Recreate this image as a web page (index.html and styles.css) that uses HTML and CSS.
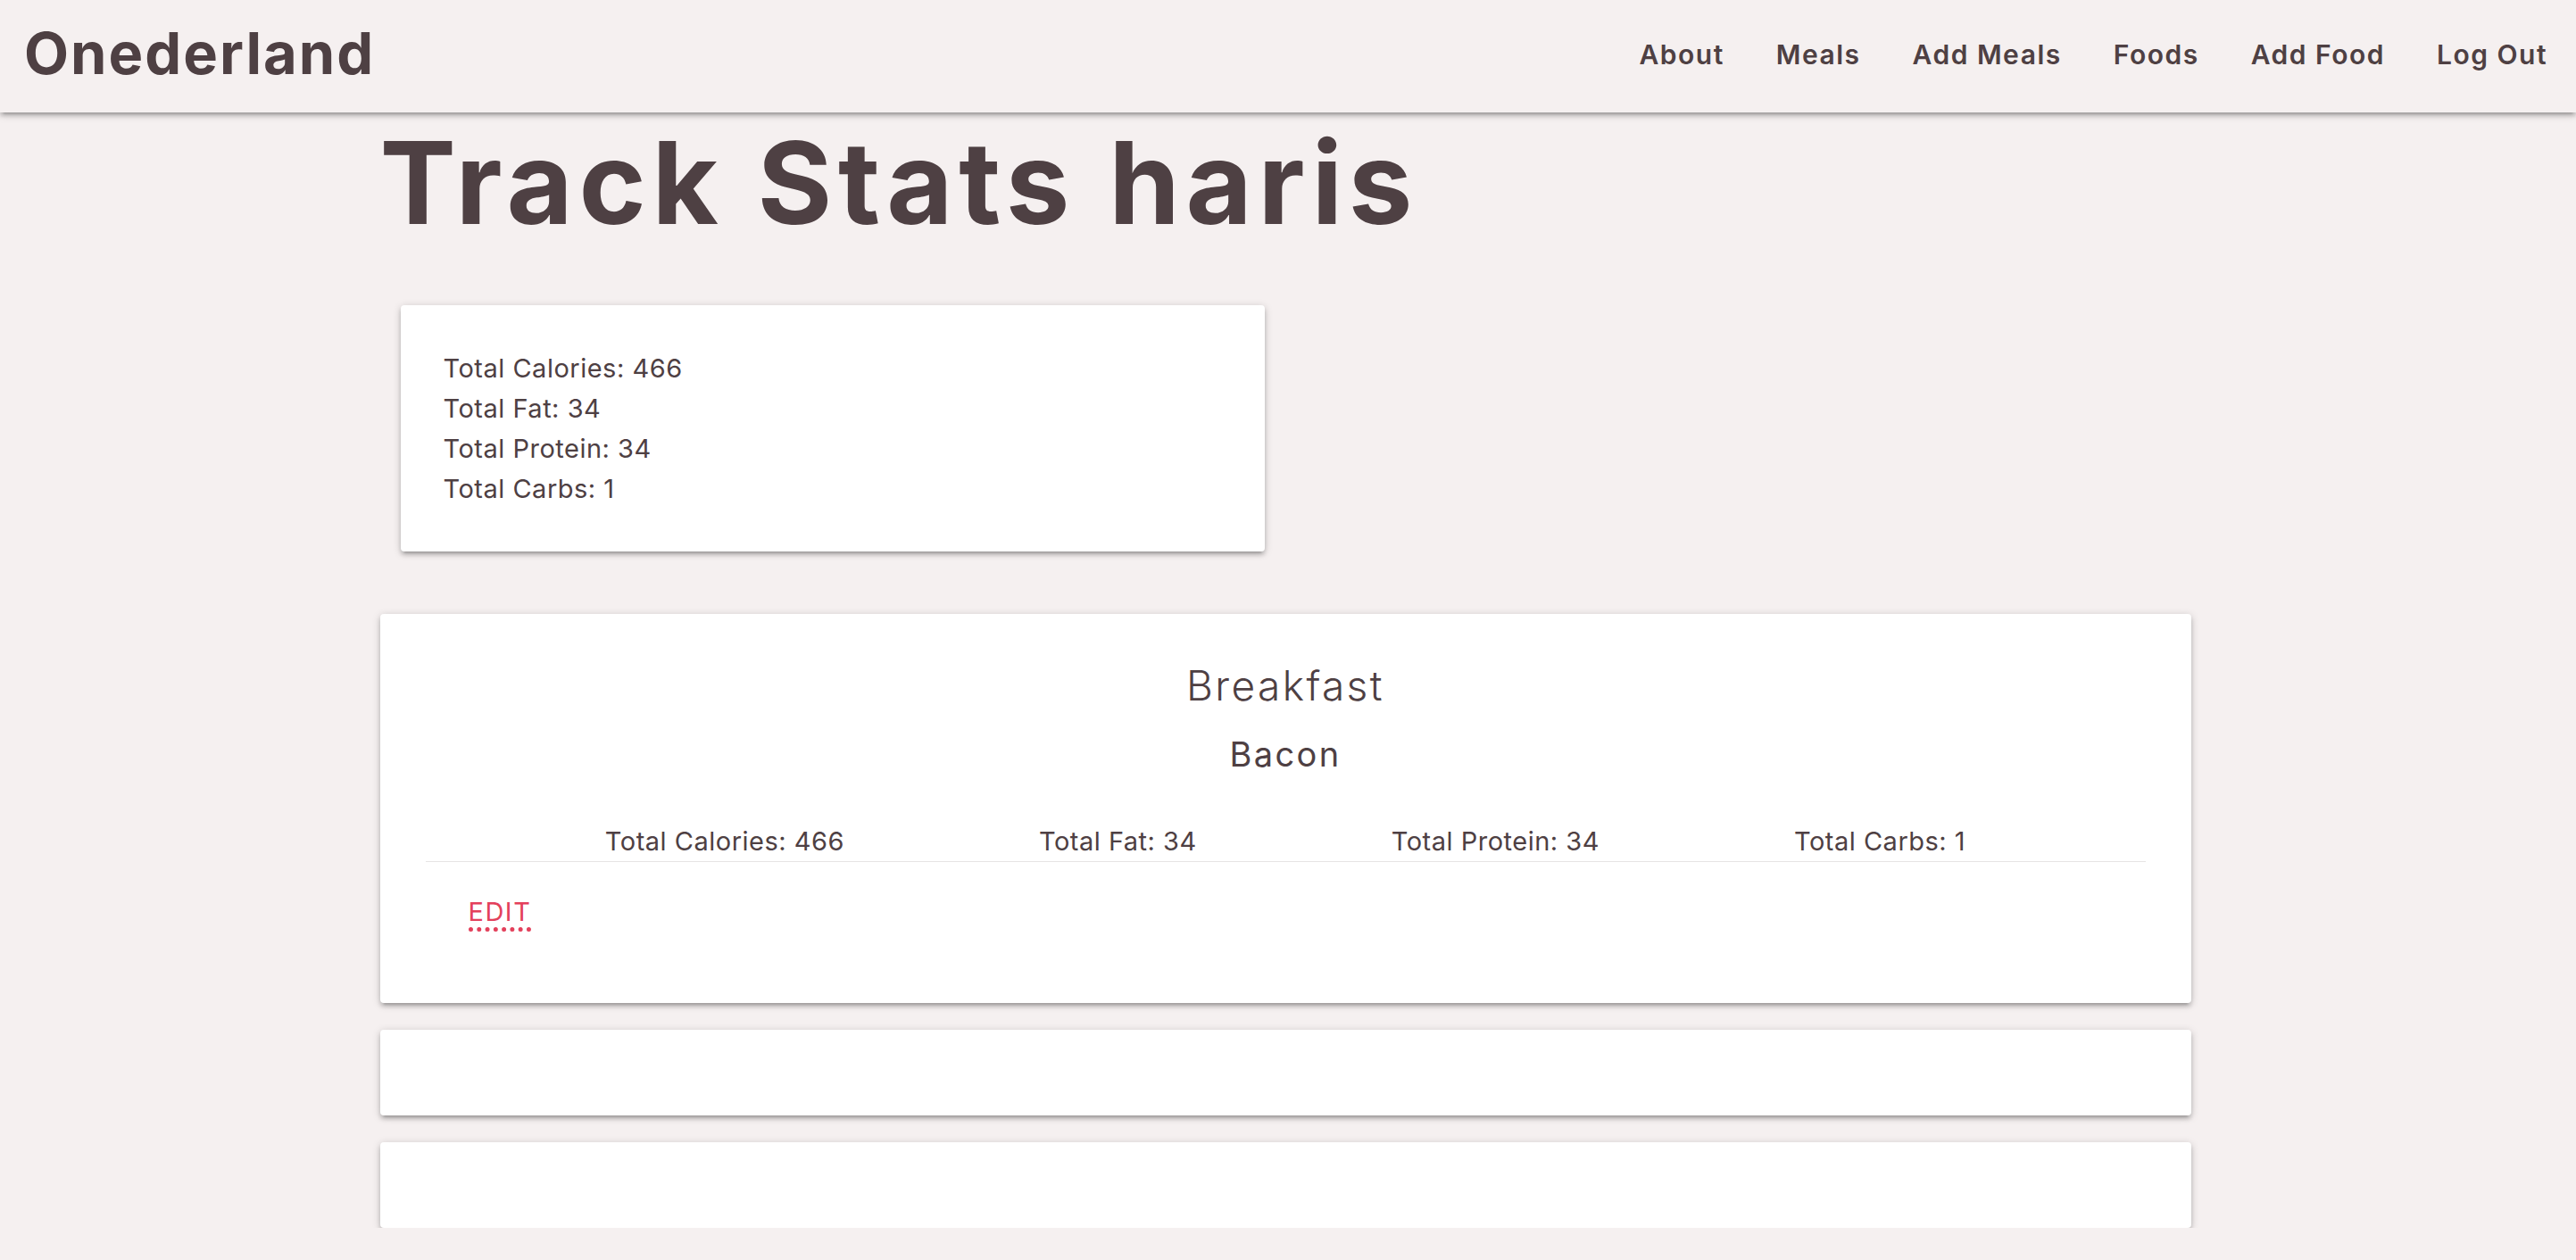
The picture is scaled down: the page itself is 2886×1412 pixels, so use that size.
FILE: index.html
```html
<!DOCTYPE html>
<html lang="en">
<head>
<meta charset="utf-8">
<title>Onederland - Track Stats</title>
<link rel="stylesheet" href="styles.css">
</head>
<body>
<nav class="navbar">
  <a class="brand" href="#">Onederland</a>
  <ul class="nav-links">
    <li><a href="#">About</a></li>
    <li><a href="#">Meals</a></li>
    <li><a href="#">Add Meals</a></li>
    <li><a href="#">Foods</a></li>
    <li><a href="#">Add Food</a></li>
    <li><a href="#">Log Out</a></li>
  </ul>
</nav>
<main class="container">
  <h1 class="page-title">Track Stats haris</h1>
  <div class="summary-row">
    <div class="summary-col">
      <div class="card summary-card">
        <p class="line">Total Calories: 466</p>
        <p class="line">Total Fat: 34</p>
        <p class="line">Total Protein: 34</p>
        <p class="line">Total Carbs: 1</p>
      </div>
    </div>
  </div>
  <div class="card meal-card">
    <h2 class="meal-title">Breakfast</h2>
    <h3 class="food-name">Bacon</h3>
    <div class="stats">
      <span class="stat">Total Calories: 466</span>
      <span class="stat">Total Fat: 34</span>
      <span class="stat">Total Protein: 34</span>
      <span class="stat">Total Carbs: 1</span>
    </div>
    <div class="actions"><a class="edit" href="#">EDIT</a></div>
  </div>
  <div class="card empty-card"></div>
  <div class="card empty-card"></div>
</main>
</body>
</html>
```
FILE: styles.css
```css
* { box-sizing: border-box; }
html, body { margin: 0; padding: 0; }
body {
  background: #f5f0f0;
  color: #4e4043;
  font-family: "Inter", "Liberation Sans", sans-serif;
  padding-right: 6px;
}
a { text-decoration: none; color: inherit; }

.navbar {
  height: 126px;
  background: #f5f0f0;
  display: flex;
  justify-content: space-between;
  align-items: flex-start;
  margin-right: -6px;
  box-shadow: 0 4px 4px 0 rgba(0,0,0,.14), 0 6px 2px -4px rgba(0,0,0,.12), 0 2px 10px 0 rgba(0,0,0,.2);
  position: relative;
  z-index: 2;
}
.brand {
  font-size: 65px;
  font-weight: 700;
  letter-spacing: 2px;
  line-height: 120px;
  padding-left: 27px;
  color: #4e4043;
}
.nav-links {
  list-style: none;
  margin: 0;
  padding: 0 3px 0 0;
  display: flex;
}
.nav-links a {
  display: block;
  padding: 0 29px;
  font-size: 30px;
  font-weight: 600;
  letter-spacing: 1.5px;
  line-height: 122px;
}

.container {
  width: 2029px;
  margin: 0 auto;
}
.page-title {
  margin: 4px 0 0;
  font-size: 128px;
  font-weight: 700;
  letter-spacing: 6.7px;
  line-height: 150px;
}

.card {
  background: #fff;
  border-radius: 4px;
  box-shadow: 0 4px 4px 0 rgba(0,0,0,.14), 0 6px 2px -4px rgba(0,0,0,.12), 0 2px 10px 0 rgba(0,0,0,.2);
  padding: 48px;
}

.summary-row { margin-top: 62px; display: flex; }
.summary-col { width: 50%; padding: 0 23px; }
.line {
  margin: 0;
  font-size: 29px;
  line-height: 45px;
  letter-spacing: 0.5px;
}

.meal-card { margin-top: 70px; text-align: center; }
.meal-title {
  margin: 0;
  font-size: 46px;
  font-weight: 300;
  line-height: 64px;
  letter-spacing: 2.4px;
}
.food-name {
  margin: 21px 0 0;
  font-size: 38px;
  font-weight: 400;
  line-height: 48px;
  letter-spacing: 2.4px;
}
.stats {
  margin: 51px 3px 0;
  display: flex;
  justify-content: center;
  gap: 218px;
  border-bottom: 1px solid #e6e4e4;
}
.stat {
  font-size: 29px;
  line-height: 45px;
  letter-spacing: 0.5px;
}
.actions {
  text-align: left;
  padding: 33px 0 32px 51px;
  font-size: 29px;
  line-height: 45px;
}
.edit {
  letter-spacing: 1.5px;
  color: #e3405b;
  border-bottom: 5px dotted #e3405b;
}

.empty-card { margin-top: 30px; height: 96px; }
```
